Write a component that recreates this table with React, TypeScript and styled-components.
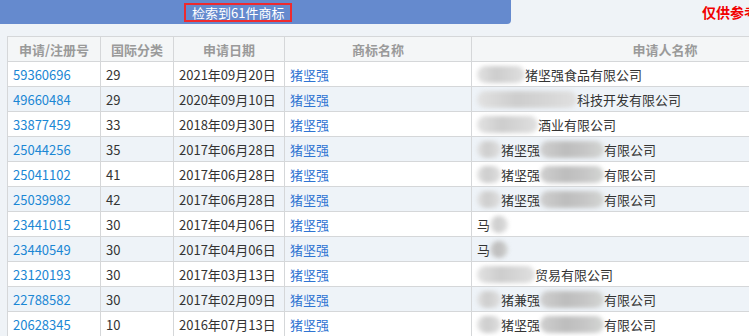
import React from 'react'
import styled, { createGlobalStyle } from 'styled-components'

const GlobalStyle = createGlobalStyle`
	html, body {
		margin: 0;
		padding: 0;
		overflow: hidden;
		background: #eff3f7;
		font-family: "Noto Sans CJK SC", "Noto Sans", sans-serif;
		font-size: 13px;
	}
`

const Page = styled.div`
	width: 900px;
	height: 336px;
	background: #eff3f7;
`

const TopStrip = styled.div`
	display: flex;
	align-items: center;
	height: 24px;
`

const Banner = styled.div`
	width: 511px;
	height: 24px;
	background: #658ace;
	border-bottom-right-radius: 4px;
	display: flex;
	align-items: center;
	padding-left: 184px;
	box-sizing: border-box;
`

const CountBox = styled.div`
	height: 19px;
	box-sizing: border-box;
	border: 2px solid #ee2a2e;
	padding: 0 6px 0 6px;
	color: #fff;
	font-size: 13px;
	line-height: 15px;
	white-space: nowrap;
`

const Notice = styled.div`
	margin-left: 191px;
	color: #f20000;
	font-weight: bold;
	font-size: 14px;
	white-space: nowrap;
`

const Table = styled.table`
	margin: 12px 0 0 7px;
	border-collapse: collapse;
	table-layout: fixed;
	width: 852px;
`

const HeadCell = styled.th<{ $w?: number }>`
	${p => (p.$w ? `width: ${p.$w}px;` : '')}
	height: 24px;
	padding: 0;
	background: #f4f6f7;
	border: 1px solid #d5d7d9;
	color: #9a9a9a;
	font-weight: bold;
	font-size: 13px;
	text-align: center;
`

const Row = styled.tr<{ $alt: boolean }>`
	background: ${p => (p.$alt ? '#eef3f8' : '#fff')};
`

const Cell = styled.td<{ $tone?: 'num' | 'link' }>`
	height: 24px;
	padding: 0 5px;
	border: 1px solid #d5d7d9;
	white-space: nowrap;
	overflow: hidden;
	color: ${p => (p.$tone === 'num' ? '#1b87d4' : p.$tone === 'link' ? '#2f74d2' : '#333')};
`

const Blur = styled.span<{ $w: number; $dark?: boolean }>`
	display: inline-block;
	width: ${p => p.$w}px;
	height: 17px;
	vertical-align: middle;
	margin-top: -2px;
	border-radius: 9px;
	filter: blur(2px);
	background: ${p =>
		p.$dark
			? 'linear-gradient(90deg, #cfcfcf, #bdbdbd 40%, #c6c6c6 70%, #d4d6d4)'
			: 'linear-gradient(90deg, #e2e2e2, #cdcdcd 40%, #d6d6d6 70%, #e0e0e0)'};
`

type Seg = string | { b: number; d?: boolean }

const rows: { no: string; cls: string; date: string; who: Seg[] }[] = [
	{ no: '59360696', cls: '29', date: '2021年09月20日', who: [{ b: 48 }, '猪坚强食品有限公司'] },
	{ no: '49660484', cls: '29', date: '2020年09月10日', who: [{ b: 100 }, '科技开发有限公司'] },
	{ no: '33877459', cls: '33', date: '2018年09月30日', who: [{ b: 61 }, '酒业有限公司'] },
	{ no: '25044256', cls: '35', date: '2017年06月28日', who: [{ b: 24 }, '猪坚强', { b: 64, d: true }, '有限公司'] },
	{ no: '25041102', cls: '41', date: '2017年06月28日', who: [{ b: 24 }, '猪坚强', { b: 64, d: true }, '有限公司'] },
	{ no: '25039982', cls: '42', date: '2017年06月28日', who: [{ b: 24 }, '猪坚强', { b: 64, d: true }, '有限公司'] },
	{ no: '23441015', cls: '30', date: '2017年04月06日', who: ['马', { b: 18 }] },
	{ no: '23440549', cls: '30', date: '2017年04月06日', who: ['马', { b: 18, d: true }] },
	{ no: '23120193', cls: '30', date: '2017年03月13日', who: [{ b: 58 }, '贸易有限公司'] },
	{ no: '22788582', cls: '30', date: '2017年02月09日', who: [{ b: 24 }, '猪兼强', { b: 64, d: true }, '有限公司'] },
	{ no: '20628345', cls: '10', date: '2016年07月13日', who: [{ b: 24 }, '猪坚强', { b: 64, d: true }, '有限公司'] },
]

const App: React.FC = () => {
	return (
		<Page>
			<GlobalStyle />
			<TopStrip>
				<Banner>
					<CountBox>检索到61件商标</CountBox>
				</Banner>
				<Notice>仅供参考</Notice>
			</TopStrip>
			<Table>
				<thead>
					<tr>
						<HeadCell $w={92}>申请/注册号</HeadCell>
						<HeadCell $w={72}>国际分类</HeadCell>
						<HeadCell $w={110}>申请日期</HeadCell>
						<HeadCell $w={186}>商标名称</HeadCell>
						<HeadCell>申请人名称</HeadCell>
					</tr>
				</thead>
				<tbody>
					{rows.map((r, i) => (
						<Row key={r.no} $alt={i % 2 === 1}>
							<Cell $tone="num">{r.no}</Cell>
							<Cell>{r.cls}</Cell>
							<Cell>{r.date}</Cell>
							<Cell $tone="link">猪坚强</Cell>
							<Cell>
								{r.who.map((s, j) =>
									typeof s === 'string' ? <span key={j}>{s}</span> : <Blur key={j} $w={s.b} $dark={s.d} />
								)}
							</Cell>
						</Row>
					))}
				</tbody>
			</Table>
		</Page>
	)
}

export default App
